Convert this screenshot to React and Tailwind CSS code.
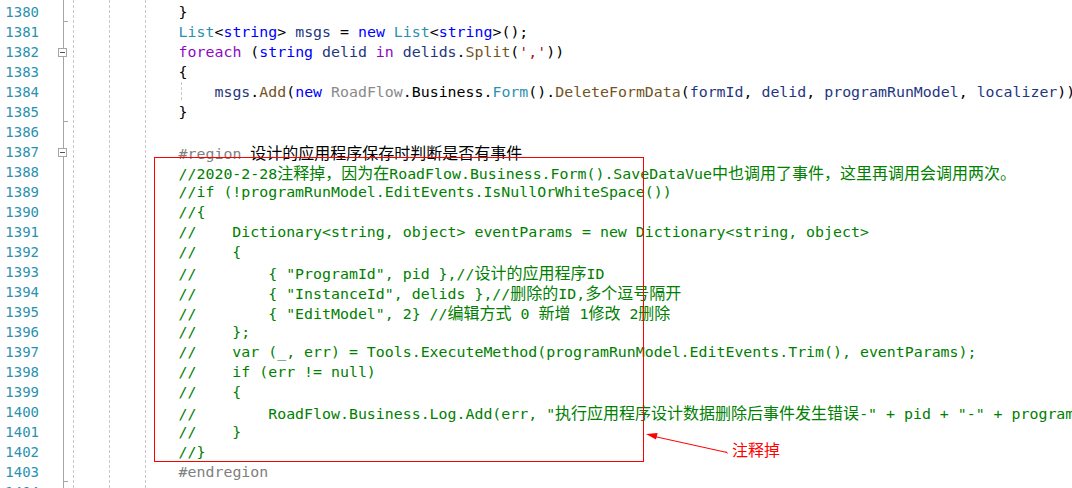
import React from "react";

const B = "text-[#000000]";
const K = "text-[#0000ff]";
const T = "text-[#2b91af]";
const P = "text-[#8f08c4]";
const V = "text-[#1f377f]";
const M = "text-[#74531f]";
const S = "text-[#a31515]";
const C = "text-[#008000]";
const G = "text-[#808080]";
const F = "text-[#8a8a8a]";

const IND = "            ";

const lines = [
  [[IND + "}", B]],
  [[IND, B], ["List", T], ["<", B], ["string", K], ["> ", B], ["msgs", V], [" = ", B], ["new", K], [" ", B], ["List", T], ["<", B], ["string", K], [">();", B]],
  [[IND, B], ["foreach", P], [" (", B], ["string", K], [" ", B], ["delid", V], [" ", B], ["in", P], [" ", B], ["delids", V], [".", B], ["Split", M], ["(", B], ["','", S], ["))", B]],
  [[IND + "{", B]],
  [[IND + "    ", B], ["msgs", V], [".", B], ["Add", M], ["(", B], ["new", K], [" ", B], ["RoadFlow", F], [".Business.", B], ["Form", T], ["().", B], ["DeleteFormData", M], ["(", B], ["formId", V], [", ", B], ["delid", V], [", ", B], ["programRunModel", V], [", ", B], ["localizer", V], ["));", B]],
  [[IND + "}", B]],
  [["", B]],
  [[IND, B], ["#region ", G], ["设计的应用程序保存时判断是否有事件", B]],
  [[IND + "//2020-2-28注释掉，因为在RoadFlow.Business.Form().SaveDataVue中也调用了事件，这里再调用会调用两次。", C]],
  [[IND + "//if (!programRunModel.EditEvents.IsNullOrWhiteSpace())", C]],
  [[IND + "//{", C]],
  [[IND + "//    Dictionary<string, object> eventParams = new Dictionary<string, object>", C]],
  [[IND + "//    {", C]],
  [[IND + "//        { \"ProgramId\", pid },//设计的应用程序ID", C]],
  [[IND + "//        { \"InstanceId\", delids },//删除的ID,多个逗号隔开", C]],
  [[IND + "//        { \"EditModel\", 2} //编辑方式 0 新增 1修改 2删除", C]],
  [[IND + "//    };", C]],
  [[IND + "//    var (_, err) = Tools.ExecuteMethod(programRunModel.EditEvents.Trim(), eventParams);", C]],
  [[IND + "//    if (err != null)", C]],
  [[IND + "//    {", C]],
  [[IND + "//        RoadFlow.Business.Log.Add(err, \"执行应用程序设计数据删除后事件发生错误-\" + pid + \"-\" + programRunModel.EditEvents);", C]],
  [[IND + "//    }", C]],
  [[IND + "//}", C]],
  [[IND, B], ["#endregion", G]],
  [["", B]],
];

const CJK = /([\u2E80-\u9FFF\u3000-\u303F\uFF00-\uFFEF]+)/;

function Seg({ text, cls }) {
  const parts = text.split(CJK);
  return (
    <span className={cls}>
      {parts.map((p, i) =>
        i % 2 === 1 ? (
          <span key={i} className="font-['Noto_Sans_CJK_SC',sans-serif] text-[16px] leading-[20px]">
            {p}
          </span>
        ) : (
          <React.Fragment key={i}>{p}</React.Fragment>
        )
      )}
    </span>
  );
}

function DashedV({ className }) {
  return (
    <svg className={className} width="1" height="488" viewBox="0 0 1 488">
      <line x1="0.5" y1="0" x2="0.5" y2="488" stroke="#c8c8c8" strokeWidth="1" strokeDasharray="3 2" />
    </svg>
  );
}

function FoldBox({ className }) {
  return (
    <div className={"absolute w-[9px] h-[9px] border border-[#a5a5a5] bg-white flex items-center justify-center " + className}>
      <div className="w-[5px] h-px bg-[#555555]" />
    </div>
  );
}

export default function App() {
  return (
    <div className="relative w-[1072px] h-[488px] bg-white overflow-hidden flex">
      {/* line numbers */}
      <div className="w-[44px] shrink-0 pt-[2px] flex flex-col font-['DejaVu_Sans_Mono',monospace] text-[14px] text-[#2b91af]">
        {lines.map((_, i) => (
          <div key={i} className="h-[20px] shrink-0 leading-[20px] text-right pr-[5px]">
            {1380 + i}
          </div>
        ))}
      </div>

      {/* fold margin */}
      <div className="relative w-[27px] shrink-0 h-full">
        <div className="absolute left-[19px] top-0 w-px h-full bg-[#a5a5a5]" />
        <div className="absolute left-[19px] top-[21px] w-[5px] h-px bg-[#a5a5a5]" />
        <div className="absolute left-[19px] top-[121px] w-[5px] h-px bg-[#a5a5a5]" />
        <div className="absolute left-[19px] top-[481px] w-[5px] h-px bg-[#a5a5a5]" />
        <FoldBox className="left-[14px] top-[48px]" />
        <FoldBox className="left-[14px] top-[148px]" />
      </div>

      {/* code */}
      <div className="flex-1 min-w-0 pt-[2px] flex flex-col overflow-hidden font-['DejaVu_Sans_Mono',monospace] text-[14.9px]">
        {lines.map((segs, i) => (
          <div key={i} className="h-[20px] shrink-0 leading-[20px] whitespace-pre overflow-hidden">
            {segs.map(([t, c], j) => (
              <Seg key={j} text={t} cls={c} />
            ))}
          </div>
        ))}
      </div>

      {/* indent guides */}
      <DashedV className="absolute left-[73px] top-0" />
      <DashedV className="absolute left-[109px] top-0" />
      <DashedV className="absolute left-[145px] top-0" />
      <svg className="absolute left-[181px] top-[82px]" width="1" height="20" viewBox="0 0 1 20">
        <line x1="0.5" y1="0" x2="0.5" y2="20" stroke="#c8c8c8" strokeWidth="1" strokeDasharray="3 2" />
      </svg>

      {/* annotation */}
      <div className="absolute left-[154px] top-[157px] w-[490px] h-[305px] border border-[#ff0000]" />
      <svg className="absolute left-[640px] top-[425px]" width="100" height="35" viewBox="0 0 100 35">
        <line x1="15" y1="11.6" x2="87" y2="27.5" stroke="#ff0000" strokeWidth="1" />
        <polygon points="6,9 17.6,8 16,14.6" fill="#ff0000" />
        <line x1="86" y1="26.5" x2="87.5" y2="28.5" stroke="#ff0000" strokeWidth="1" />
      </svg>
      <div className="absolute left-[732px] top-[439px] leading-[20px] text-[16px] text-[#ff0000] font-['Noto_Sans_CJK_SC',sans-serif]">
        注释掉
      </div>
    </div>
  );
}
